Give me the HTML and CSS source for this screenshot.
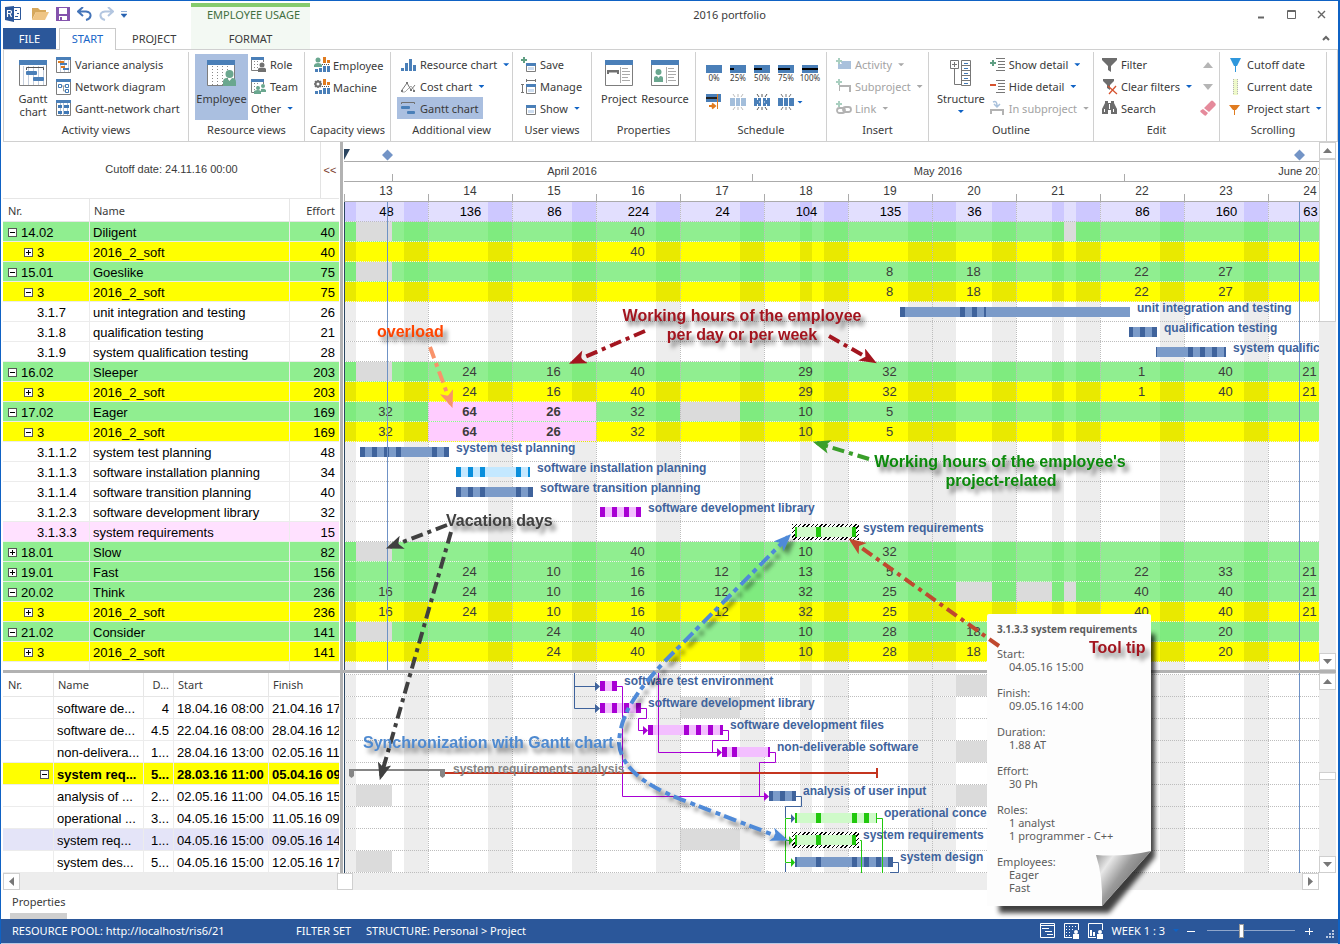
FILE: index.html
```html
<!DOCTYPE html>
<html lang="en">
<head>
<meta charset="utf-8">
<title>2016 portfolio</title>
<link rel="stylesheet" href="styles.css">
</head>
<body>
<svg class="sprite" aria-hidden="true">
  <symbol id="i-gantt-lg" viewBox="0 0 28 26"><path d="M.5 4V25.500H27.500V4" fill="#fff" stroke="#7d7d7d"/><path d="M4.500 6V25M9.500 6V25M14.500 6V25M19.500 6V25M24.500 6V25" stroke="#c3cddc"/><path d="M0 0H28V5H0z" fill="#4a7fb8"/><path d="M7.500 10V7.500H24.500V10" fill="none" stroke="#555"/><rect x="7" y="11" width="11" height="4" rx="1" fill="#4a7fb8"/><rect x="14" y="17" width="11" height="4" rx="1" fill="#4a7fb8"/></symbol>
  <symbol id="i-employee-lg" viewBox="0 0 30 26"><path d="M.5 4V25.500H27.500V4" fill="#fff" stroke="#7d7d7d"/><path d="M5.500 6V25M10.500 6V25M15.500 6V25M20.500 6V25" stroke="#8a8a8a" stroke-dasharray="1 2"/><path d="M0 0H28V5H0z" fill="#4a7fb8"/><circle cx="22.500" cy="14" r="4" fill="#6aa78f"/><path d="M16 26v-4q0-4 4-4l2.500 3 2.500-3q4 0 4 4v4z" fill="#6aa78f"/></symbol>
  <symbol id="i-project-lg" viewBox="0 0 28 26"><path d="M.5 4V25.500H27.500V4" fill="#fff" stroke="#7d7d7d"/><path d="M0 0H28V5H0z" fill="#4a7fb8"/><path d="M2 10H14V14H12V12.500H4V14H2z" fill="#707070"/><path d="M15.500 7V23" stroke="#aaa"/><path d="M17 8.500H23M17 11.500H25M17 14.500H25M17 17.500H23M17 20.500H25" stroke="#aaa"/></symbol>
  <symbol id="i-resource-lg" viewBox="0 0 28 26"><path d="M.5 4V25.500H27.500V4" fill="#fff" stroke="#7d7d7d"/><path d="M0 0H28V5H0z" fill="#4a7fb8"/><circle cx="7.500" cy="12" r="3" fill="#6aa78f"/><path d="M3 22v-4q0-2 3-2l1.500 2 1.500-2q3 0 3 2v4z" fill="#6aa78f"/><path d="M15.500 7V23" stroke="#aaa"/><path d="M17 8.500H23M17 11.500H25M17 14.500H25M17 17.500H23M17 20.500H25" stroke="#aaa"/></symbol>
  <symbol id="i-structure-lg" viewBox="0 0 22 26"><g fill="none" stroke="#777"><path d="M.5.5H8.500V8.500H.5zM4.500 9V24.500H11M11.500.5H20.500V25.500H11.500zM11.500 5.500H20.500M11.500 10.500H20.500M11.500 15.500H20.500M11.500 20.500H20.500M2 4.500H7M4.500 2V7"/></g><path d="M14 3.500H18M14 8.500H18M14 13.500H18M14 18.500H18M14 23.500H18" stroke="#3f78b5"/></symbol>
  <symbol id="i-variance" viewBox="0 0 16 16"><path d="M.5 2V15.500H14.500V2" fill="#fff" stroke="#7d7d7d"/><path d="M4.500 3V15M8.500 3V15M12.500 3V15" stroke="#c3cddc"/><path d="M0 0H15V3H0z" fill="#4a7fb8"/><path d="M2 4H8V6H2zM5 9H9V11H5z" fill="#e07b1f"/><path d="M4 6H11V8H4zM7 11H13V13H7z" fill="#4a7fb8"/></symbol>
  <symbol id="i-network" viewBox="0 0 16 16"><path d="M.5 2V15.500H14.500V2" fill="#fff" stroke="#7d7d7d"/><path d="M0 0H15V3H0z" fill="#4a7fb8"/><path d="M2.500 5.500H5.500V8.500H2.500zM9.500 5.500H12.500V8.500H9.500zM9.500 10.500H12.500V13.500H9.500z" fill="none" stroke="#3f78b5"/><path d="M6 7H9M7.500 7V12H9" stroke="#999" fill="none"/></symbol>
  <symbol id="i-ganttnet" viewBox="0 0 16 16"><path d="M.5 2V15.500H14.500V2" fill="#fff" stroke="#7d7d7d"/><path d="M4.500 3V15M7.500 3V15M11.500 3V15" stroke="#b5c3d6"/><path d="M0 0H15V3H0z" fill="#4a7fb8"/><path d="M2 5H6V8H2zM8 5H13V8H8zM2 11H6V14H2zM8 11H13V14H8z" fill="#3f78b5"/></symbol>
  <symbol id="i-role" viewBox="0 0 16 16"><path d="M.5 2V13.500H8M12.500 2V5" fill="none" stroke="#7d7d7d"/><path d="M3.500 4V13M6.500 4V13" stroke="#888" stroke-dasharray="1 2"/><path d="M0 0H13V3H0z" fill="#4a7fb8"/><circle cx="11" cy="8" r="2.500" fill="#707070"/><path d="M7 15v-3q1-2 4-1 3-1 4 1v3z" fill="#707070"/></symbol>
  <symbol id="i-team" viewBox="0 0 16 16"><path d="M.5 2V13.500H4M12.500 2V5" fill="none" stroke="#7d7d7d"/><path d="M3.500 4V11M6.500 4V8" stroke="#888" stroke-dasharray="1 2"/><path d="M0 0H13V3H0z" fill="#4a7fb8"/><circle cx="7" cy="9" r="2" fill="#6aa78f"/><circle cx="12" cy="7" r="2" fill="#6aa78f"/><path d="M3 15v-3q4-2 7 0v3zM10 13v-3q3-1 5 1v2z" fill="#6aa78f"/></symbol>
  <symbol id="i-capemp" viewBox="0 0 16 16"><circle cx="4" cy="3" r="2.500" fill="#6aa78f"/><path d="M0 10V8q1-2 4-2t4 2v2z" fill="#6aa78f"/><path d="M9 0H12V6H9zM13 3H16V6H13z" fill="#e07b1f"/><path d="M8 7.500H16" stroke="#555" stroke-dasharray="1 1"/><path d="M9 9H12V15H9zM13 9H16V15H13zM5 11H8V15H5zM1 12H4V15H1z" fill="#4a7fb8"/></symbol>
  <symbol id="i-capmach" viewBox="0 0 16 16"><circle cx="4" cy="5" r="2.500" fill="none" stroke="#707070" stroke-width="2"/><path d="M4 1V2.500M4 7.500V9M0 5H1.500M6.500 5H8M1 2L2 3M6 7L7 8M1 8L2 7M6 3L7 2" stroke="#707070" stroke-width="1.500"/><path d="M9 0H12V6H9zM13 3H16V6H13z" fill="#e07b1f"/><path d="M8 7.500H16" stroke="#555" stroke-dasharray="1 1"/><path d="M9 9H12V15H9zM13 9H16V15H13zM5 11H8V15H5zM1 12H4V15H1z" fill="#4a7fb8"/></symbol>
  <symbol id="i-reschart" viewBox="0 0 16 16"><path d="M0 11H3V14H0zM4 6H7V14H4zM8 2H11V14H8zM12 8H15V14H12z" fill="#4a7fb8"/></symbol>
  <symbol id="i-cost" viewBox="0 0 16 16"><path d="M1 13H4L10 7L13 11" fill="none" stroke="#aaa"/><path d="M1 11L6 4L10 11L14 6" fill="none" stroke="#777"/><path d="M5 3H7V5H5zM9 10H11V12H9zM0 11H2V13H0zM12 11H14V13H12z" fill="#777"/></symbol>
  <symbol id="i-ganttch" viewBox="0 0 16 16"><path d="M.5 4V2.500H13.500V4" fill="none" stroke="#707070"/><rect x="0" y="6" width="9" height="3" rx="1" fill="#4a7fb8"/><rect x="6" y="11" width="8" height="3" rx="1" fill="#4a7fb8"/></symbol>
  <symbol id="i-save" viewBox="0 0 16 16"><path d="M2 0H4V2H6V4H4V6H2V4H0V2H2z" fill="#5f9f83"/><path d="M5.500 7V14.500H14.500V7" fill="#fff" stroke="#7d7d7d"/><path d="M5 6H15V9H5z" fill="#4a7fb8"/><path d="M7 10H13V13H7z" fill="#cdddf0"/></symbol>
  <symbol id="i-manage" viewBox="0 0 16 16"><path d="M5.500 0V3M14.500 0V3M6 1.500H14M0 5.500H3M0 13.500H3M1.500 6V13" stroke="#777"/><path d="M5.500 7V14.500H14.500V7" fill="#fff" stroke="#7d7d7d"/><path d="M5 5H15V8H5z" fill="#4a7fb8"/><path d="M7 10H13V13H7z" fill="#cdddf0"/></symbol>
  <symbol id="i-show" viewBox="0 0 16 16"><path d="M5.500 7V14.500H14.500V7" fill="#fff" stroke="#7d7d7d"/><path d="M5 5H15V8H5z" fill="#4a7fb8"/><path d="M7 10H13V13H7z" fill="#cdddf0"/></symbol>
  <symbol id="i-tomark" viewBox="0 0 16 16"><path d="M0 0H15V8H0z" fill="#4a7fb8"/><path d="M0 3H11V5H0z" fill="#222"/><path d="M11.500 0V15" stroke="#e07b1f"/><path d="M3 12H8M6 9.500L9 12L6 14.500" stroke="#e07b1f" stroke-width="2" fill="none"/></symbol>
  <symbol id="i-split" viewBox="0 0 16 16"><path d="M0 4H5V12H0zM6 4H10V12H6zM11 4H16V12H11z" fill="#4a7fb8"/><path d="M3 0L5 3M8 0V3M13 0L11 3M3 16L5 13M8 16V13M13 16L11 13" stroke="#777"/></symbol>
  <symbol id="i-merge" viewBox="0 0 16 16"><path d="M0 4H7V12H0zM9 4H16V12H9z" fill="#4a7fb8"/><path d="M3.500 4V6M3.500 10V12M12.500 4V6M12.500 10V12M5 8H6M10 8H11" stroke="#fff"/><path d="M3 0L5 3M8 0V3M13 0L11 3M3 16L5 13M8 16V13M13 16L11 13" stroke="#555"/></symbol>
  <symbol id="i-activity" viewBox="0 0 16 16"><path d="M4 4H15V12H2V7H6z" fill="#a9c1dc"/><path d="M2 1H4V3H6V5H4V7H2V5H0V3H2z" fill="#a9cfc0"/></symbol>
  <symbol id="i-subproj" viewBox="0 0 16 16"><path d="M3 6H15V13H13V8H4V12H3z" fill="#b3b3b3"/><path d="M2 0H4V2H6V4H4V6H2V4H0V2H2z" fill="#a9cfc0"/></symbol>
  <symbol id="i-link" viewBox="0 0 16 16"><g fill="none" stroke="#b3b3b3" stroke-width="1.800"><rect x="1" y="8" width="8" height="5" rx="2.500"/><rect x="7" y="7" width="8" height="5" rx="2.500"/></g><path d="M2 1H4V3H6V5H4V7H2V5H0V3H2z" fill="#a9cfc0"/></symbol>
  <symbol id="i-showdet" viewBox="0 0 16 16"><path d="M2 3H4V5H6V7H4V9H2V7H0V5H2z" fill="#5f9f83"/><path d="M6 1.500H15M8 4.500H15M8 7.500H15M8 10.500H15M6 13.500H15" stroke="#777"/></symbol>
  <symbol id="i-hidedet" viewBox="0 0 16 16"><path d="M0 5H6V7H0z" fill="#d6532f"/><path d="M6 1.500H15M8 4.500H15M8 7.500H15M8 10.500H15M6 13.500H15" stroke="#777"/></symbol>
  <symbol id="i-insub" viewBox="0 0 16 16"><path d="M0 9H14V15H12V11H2V14H0z" fill="#b3b3b3"/><path d="M3 2Q7 0 7 6M4 4L7 7L10 4" fill="none" stroke="#a9c1dc" stroke-width="1.500"/></symbol>
  <symbol id="i-filter" viewBox="0 0 16 16"><path d="M0 1H15V3L9 9V15L6 13V9L0 3z" fill="#6d6d6d"/></symbol>
  <symbol id="i-clear" viewBox="0 0 16 16"><path d="M1 0H12V2L8 6V11L5 9V6L1 2z" fill="#6d6d6d"/><path d="M6 7L15 15M14 7L7 15" stroke="#d6532f" stroke-width="1.300"/></symbol>
  <symbol id="i-search" viewBox="0 0 16 16"><path d="M3 1H6V3H9V1H12V3L15 9V14H9V10H6V14H0V9L3 3z" fill="#6d6d6d"/><path d="M2.500 9V12M11.500 9V12M7.500 4V9" stroke="#fff"/></symbol>
  <symbol id="i-eraser" viewBox="0 0 16 16"><path d="M4 8L11 1Q12 0 13 1L15.500 3.500Q16 4.500 15.500 5.500L9 12zM3 9L8 13L6 15.500Q5 16 4 15L.5 12Q0 11 .5 10.500z" fill="#e58a9b"/></symbol>
  <symbol id="i-cutoff" viewBox="0 0 16 16"><path d="M2 1H13L9 9H6z" fill="#2f97dc"/><path d="M7.500 8V15" stroke="#2f97dc"/></symbol>
  <symbol id="i-current" viewBox="0 0 16 16"><path d="M5 0H10V16H5z" fill="#eef9c9"/><path d="M5.500 0V16M9.500 0V16" stroke="#b5b5b5" stroke-dasharray="1 1"/></symbol>
  <symbol id="i-pstart" viewBox="0 0 16 16"><path d="M1 5H12L8 10H5z" fill="#e07b1f"/><path d="M6.500 9V15" stroke="#e07b1f"/></symbol>
</svg>

<div class="window">
  <header class="head">
    <div class="head-left">
      <div class="quick">
        <button type="button" aria-label="Application menu"><svg width="16" height="16" viewBox="0 0 16 16"><path d="M0 1L9 0V16L0 14z" fill="#2b579a"/><path d="M9 1.500H15.500V13.500H9" fill="#fff" stroke="#2b579a"/><path d="M10 4.500H12M12 7.500H14M10 10.500H13" stroke="#2b579a"/><path d="M2.500 11V4.500H5Q6.500 4.500 6.500 6T5 7.500H3M5 8L6.500 11" fill="none" stroke="#fff" stroke-width="1.200"/></svg></button>
        <button type="button" class="gap" aria-label="Open"><svg width="17" height="14" viewBox="0 0 17 14"><path d="M0 13V1H6L8 3H14V5H4z" fill="#d6a85c"/><path d="M4 5H17L13 13H0z" fill="#efc585"/></svg></button>
        <button type="button" aria-label="Save"><svg width="14" height="14" viewBox="0 0 14 14"><path d="M0 0H14V14H0z" fill="#8453ad"/><path d="M3 1H11V7H3zM3 9H11V13H3z" fill="#fff"/><path d="M4 10H6V13H4z" fill="#8453ad"/></svg></button>
        <button type="button" aria-label="Undo"><svg width="15" height="14" viewBox="0 0 15 14"><path d="M6 0L1 4.500L6 9M2 4.500H9Q14 5 13.500 9Q13 12 9 13" fill="none" stroke="#4474b8" stroke-width="2"/></svg></button>
        <button type="button" aria-label="Redo"><svg width="15" height="14" viewBox="0 0 15 14"><path d="M9 0L14 4.500L9 9M13 4.500H6Q1 5 1.500 9Q2 12 6 13" fill="none" stroke="#b3c6e0" stroke-width="2"/></svg></button>
        <button type="button" aria-label="Customize toolbar"><svg width="6" height="7" viewBox="0 0 6 7"><path d="M0 .5H6M0 3H6L3 6.500z" stroke="#2560b0" stroke-width=".5" fill="#2560b0"/></svg></button>
      </div>
      <nav class="tabs">
        <button type="button" class="tab file">FILE</button>
        <button type="button" class="tab active">START</button>
        <button type="button" class="tab">PROJECT</button>
      </nav>
    </div>
    <div class="context"><span>EMPLOYEE USAGE</span><button type="button">FORMAT</button></div>
    <h1 class="title">2016 portfolio</h1>
    <div class="controls">
      <div>
        <button type="button" aria-label="Minimize"><svg width="9" height="9"><path d="M1 7.500H7" stroke="#666" stroke-width="2"/></svg></button>
        <button type="button" aria-label="Maximize"><svg width="9" height="9"><path d="M.5.5H8.500V8.500H.5zM0 1.500H9" fill="none" stroke="#666"/></svg></button>
        <button type="button" aria-label="Close"><svg width="9" height="9"><path d="M1 1L8 8M8 1L1 8" stroke="#666" stroke-width="1.400"/></svg></button>
      </div>
      <button type="button" aria-label="Collapse ribbon"><svg width="8" height="6"><path d="M1 5L4 2L7 5" fill="none" stroke="#666" stroke-width="2"/></svg></button>
    </div>
  </header>

  <section class="ribbon">
    <div class="group g-activity">
      <div class="tools">
        <button type="button" class="big w42"><svg width="28" height="26"><use href="#i-gantt-lg"/></svg><span>Gantt<br>chart</span></button>
        <div class="col">
          <button type="button" class="tool"><svg width="16" height="16"><use href="#i-variance"/></svg>Variance analysis</button>
          <button type="button" class="tool"><svg width="16" height="16"><use href="#i-network"/></svg>Network diagram</button>
          <button type="button" class="tool"><svg width="16" height="16"><use href="#i-ganttnet"/></svg>Gantt-network chart</button>
        </div>
      </div><h2>Activity views</h2>
    </div>
    <div class="group g-resource">
      <div class="tools">
        <button type="button" class="big w53 on"><svg width="30" height="26"><use href="#i-employee-lg"/></svg><span>Employee</span></button>
        <div class="col">
          <button type="button" class="tool"><svg width="16" height="16"><use href="#i-role"/></svg>Role</button>
          <button type="button" class="tool"><svg width="16" height="16"><use href="#i-team"/></svg>Team</button>
          <button type="button" class="tool">Other<i class="drop far"></i></button>
        </div>
      </div><h2>Resource views</h2>
    </div>
    <div class="group g-capacity">
      <div class="tools"><div class="col">
        <button type="button" class="tool"><svg width="16" height="16"><use href="#i-capemp"/></svg>Employee</button>
        <button type="button" class="tool"><svg width="16" height="16"><use href="#i-capmach"/></svg>Machine</button>
      </div></div><h2>Capacity views</h2>
    </div>
    <div class="group g-extra">
      <div class="tools"><div class="col">
        <button type="button" class="tool"><svg width="16" height="16"><use href="#i-reschart"/></svg>Resource chart<i class="drop"></i></button>
        <button type="button" class="tool"><svg width="16" height="16"><use href="#i-cost"/></svg>Cost chart<i class="drop"></i></button>
        <button type="button" class="tool on"><svg width="16" height="16"><use href="#i-ganttch"/></svg>Gantt chart</button>
      </div></div><h2>Additional view</h2>
    </div>
    <div class="group">
      <div class="tools"><div class="col">
        <button type="button" class="tool"><svg width="16" height="16"><use href="#i-save"/></svg>Save</button>
        <button type="button" class="tool"><svg width="16" height="16"><use href="#i-manage"/></svg>Manage</button>
        <button type="button" class="tool"><svg width="16" height="16"><use href="#i-show"/></svg>Show<i class="drop"></i></button>
      </div></div><h2>User views</h2>
    </div>
    <div class="group">
      <div class="tools">
        <button type="button" class="big w46"><svg width="28" height="26"><use href="#i-project-lg"/></svg><span>Project</span></button>
        <button type="button" class="big w46"><svg width="28" height="26"><use href="#i-resource-lg"/></svg><span>Resource</span></button>
      </div><h2>Properties</h2>
    </div>
    <div class="group">
      <div class="tools percents">
        <button type="button" class="pct"><svg width="16" height="8"><path d="M0 0H16V8H0z" fill="#4a7fb8"/></svg>0%</button>
        <button type="button" class="pct"><svg width="16" height="8"><path d="M0 0H16V8H0z" fill="#4a7fb8"/><path d="M0 3H4V5H0z"/></svg>25%</button>
        <button type="button" class="pct"><svg width="16" height="8"><path d="M0 0H16V8H0z" fill="#4a7fb8"/><path d="M0 3H8V5H0z"/></svg>50%</button>
        <button type="button" class="pct"><svg width="16" height="8"><path d="M0 0H16V8H0z" fill="#4a7fb8"/><path d="M0 3H12V5H0z"/></svg>75%</button>
        <button type="button" class="pct"><svg width="16" height="8"><path d="M0 0H16V8H0z" fill="#4a7fb8"/><path d="M0 3H16V5H0z"/></svg>100%</button>
        <button type="button" aria-label="Move to date"><svg width="16" height="16"><use href="#i-tomark"/></svg></button>
        <button type="button" class="faded" aria-label="Split"><svg width="16" height="16"><use href="#i-split"/></svg></button>
        <button type="button" aria-label="Split all"><svg width="16" height="16"><use href="#i-merge"/></svg></button>
        <button type="button" class="with-drop" aria-label="Join"><svg width="16" height="16"><use href="#i-split"/></svg><i class="drop"></i></button>
      </div><h2>Schedule</h2>
    </div>
    <div class="group g-insert">
      <div class="tools"><div class="col">
        <button type="button" class="tool" disabled><svg width="16" height="16"><use href="#i-activity"/></svg>Activity<i class="drop"></i></button>
        <button type="button" class="tool" disabled><svg width="16" height="16"><use href="#i-subproj"/></svg>Subproject<i class="drop"></i></button>
        <button type="button" class="tool" disabled><svg width="16" height="16"><use href="#i-link"/></svg>Link<i class="drop"></i></button>
      </div></div><h2>Insert</h2>
    </div>
    <div class="group g-outline">
      <div class="tools">
        <button type="button" class="big w50"><svg width="22" height="26"><use href="#i-structure-lg"/></svg><span>Structure</span><i class="drop"></i></button>
        <div class="col">
          <button type="button" class="tool"><svg width="16" height="16"><use href="#i-showdet"/></svg>Show detail<i class="drop"></i></button>
          <button type="button" class="tool"><svg width="16" height="16"><use href="#i-hidedet"/></svg>Hide detail<i class="drop"></i></button>
          <button type="button" class="tool" disabled><svg width="16" height="16"><use href="#i-insub"/></svg>In subproject<i class="drop"></i></button>
        </div>
      </div><h2>Outline</h2>
    </div>
    <div class="group g-edit">
      <div class="tools spread">
        <div class="col">
          <button type="button" class="tool"><svg width="16" height="16"><use href="#i-filter"/></svg>Filter</button>
          <button type="button" class="tool"><svg width="16" height="16"><use href="#i-clear"/></svg>Clear filters<i class="drop"></i></button>
          <button type="button" class="tool"><svg width="16" height="16"><use href="#i-search"/></svg>Search</button>
        </div>
        <div class="col">
          <button type="button" class="tool" aria-label="Previous"><svg width="16" height="16"><path d="M3 11H13L8 5z" fill="#b5b5b5"/></svg></button>
          <button type="button" class="tool" aria-label="Next"><svg width="16" height="16"><path d="M3 5H13L8 11z" fill="#b5b5b5"/></svg></button>
          <button type="button" class="tool" aria-label="Erase"><svg width="16" height="16"><use href="#i-eraser"/></svg></button>
        </div>
      </div><h2>Edit</h2>
    </div>
    <div class="group">
      <div class="tools"><div class="col">
        <button type="button" class="tool"><svg width="16" height="16"><use href="#i-cutoff"/></svg>Cutoff date</button>
        <button type="button" class="tool"><svg width="16" height="16"><use href="#i-current"/></svg>Current date</button>
        <button type="button" class="tool"><svg width="16" height="16"><use href="#i-pstart"/></svg>Project start<i class="drop"></i></button>
      </div></div><h2>Scrolling</h2>
    </div>
  </section>

  <main class="work">
    <section class="pane upper">
      <div class="list">
        <div class="cutoff"><span>Cutoff date: 24.11.16 00:00</span><button type="button">&lt;&lt;</button></div>
        <table class="grid staff">
          <colgroup><col class="c-nr"><col class="c-name"><col></colgroup>
          <thead><tr><th>Nr.</th><th>Name</th><th class="num">Effort</th></tr></thead>
          <tbody id="staff"></tbody>
        </table>
      </div>
      <div class="chart">
        <div class="line">
          <svg class="marks" width="970" height="19"><path d="M0 7H6L0 18z" fill="#2b4560"/><path d="M38 13L43.500 7.500L49 13L43.500 18.500zM950 13L955.500 7.500L961 13L955.500 18.500z" fill="#7394c6"/></svg>
        </div>
        <div class="line months"><span></span><span>April 2016</span><span>May 2016</span><span>June 2016</span></div>
        <div class="line weeks" id="weeks"></div>
        <div class="plot" id="usage"><i class="today start"></i><i class="today cut"></i><i class="today end"></i></div>
      </div>
      <div class="vbar"><button type="button" class="sb" aria-label="Scroll up"><svg width="9" height="5"><path d="M0 5H9L4.500 0z" fill="#777"/></svg></button><div class="track"><i class="thumb tall"></i></div><button type="button" class="sb" aria-label="Scroll down"><svg width="9" height="5"><path d="M0 0H9L4.500 5z" fill="#777"/></svg></button></div>
    </section>
    <div class="hsplit"></div>
    <section class="pane lower">
      <div class="list">
        <table class="grid tasks">
          <colgroup><col class="c-no"><col class="c-task"><col class="c-dur"><col class="c-start"><col></colgroup>
          <thead><tr><th>Nr.</th><th>Name</th><th class="num">D...</th><th>Start</th><th>Finish</th></tr></thead>
          <tbody id="tasks"></tbody>
        </table>
      </div>
      <div class="chart">
        <div class="plot" id="gantt"><i class="today start"></i><i class="today end"></i><div class="edge"></div></div>
        <svg class="links" width="600" height="200" fill="none">
          <g stroke="#3f639c"><path d="M230.500 0V35.500H252M230.500 13.500H252"/><path d="M452 123.500H457.500V133.500H441.500V145M441.500 190V199M549 189.500H554.500V199.500H546"/></g>
          <g stroke="#a800d4"><path d="M273 13.500H278.500V123.500H421"/><path d="M297 35.500H302.500V45.500H294.500V57.500H300"/><path d="M314.500 0V79.500H373M379 57.500H384.500V67.500H368.500V79"/><path d="M426 79.500H431.500V89.500H415.500V123"/></g>
          <g stroke="#22c80e"><path d="M441.500 145.500V189.500H447M441.500 145.500H447M441.500 167.500H447M533 145.500H538.500V200M516 167.500H517.500V200"/></g>
          <path d="M251 9L256 13.500L251 18zM251 31L256 35.500L251 40zM447 141L451 145.500L447 150z" fill="#3f639c"/>
          <path d="M299 53L304 57.500L299 62zM373 75L378 79.500L373 84zM420 119L425 123.500L420 128z" fill="#a800d4"/>
          <path d="M447 185L451 189.500L447 194zM445 163L449 167.500L445 172z" fill="#22c80e"/>
          <path d="M5 96H101V103L98.500 105L96 103V98H10V103L7.500 105L5 103z" fill="#858585"/>
          <path d="M101 100H533M533 95V105" stroke="#c4351f" stroke-width="2"/>
        </svg>
      </div>
      <div class="vbar"><button type="button" class="sb" aria-label="Scroll up"><svg width="9" height="5"><path d="M0 5H9L4.500 0z" fill="#777"/></svg></button><div class="track mid"><i class="thumb short"></i></div><button type="button" class="sb" aria-label="Scroll down"><svg width="9" height="5"><path d="M0 0H9L4.500 5z" fill="#777"/></svg></button></div>
    </section>
    <div class="hbar"><button type="button" class="sb" aria-label="Scroll left"><svg width="5" height="9"><path d="M5 0V9L0 4.500z" fill="#777"/></svg></button><div class="track"><i class="thumb wide"></i></div><button type="button" class="sb" aria-label="Scroll right"><svg width="5" height="9"><path d="M0 0V9L5 4.500z" fill="#777"/></svg></button></div>
  </main>

  <div class="dock"><button type="button">Properties</button></div>

  <aside class="tip">
    <svg class="tip-page" width="190" height="310" viewBox="0 0 190 310">
      <defs>
        <linearGradient id="curl" x1="0" y1="0" x2="1" y2=".7"><stop offset="0" stop-color="#8f8f8f"/><stop offset=".25" stop-color="#e8e8e8"/><stop offset=".5" stop-color="#9b9b9b"/><stop offset=".75" stop-color="#777"/></linearGradient>
        <filter id="soft" x="-10%" y="-10%" width="130%" height="120%"><feGaussianBlur stdDeviation="2.500"/></filter>
      </defs>
      <path d="M12 20H168V243L122 299H12z" fill="#000" opacity=".75" filter="url(#soft)"/>
      <path d="M0 2Q0 0 2 0H162Q164 0 164 2V237L115 292H0z" fill="#fdfdfd"/>
      <path d="M109 241Q137 243 164 237L115 292Q116 262 109 241z" fill="url(#curl)"/>
    </svg>
    <div class="tip-text">
      <strong>3.1.3.3 system requirements</strong>
      <dl>
        <dt>Start:</dt><dd>04.05.16 15:00</dd>
        <dt>Finish:</dt><dd>09.05.16 14:00</dd>
        <dt>Duration:</dt><dd>1.88 AT</dd>
        <dt>Effort:</dt><dd>30 Ph</dd>
        <dt>Roles:</dt><dd>1 analyst</dd><dd>1 programmer - C++</dd>
        <dt>Employees:</dt><dd>Eager</dd><dd>Fast</dd>
      </dl>
    </div>
  </aside>

  <svg class="notes" width="1340" height="944" viewBox="0 0 1340 944">
    <defs>
      <marker id="tip-shape" viewBox="0 0 20 16" refX="15" refY="8" markerWidth="18" markerHeight="14" orient="auto-start-reverse" markerUnits="userSpaceOnUse"><path d="M0 0L20 8L0 16L5 8z" fill="context-stroke"/></marker>
    </defs>
    <g class="strokes">
      <path d="M430 347L451 404" stroke="#f9936b"/>
      <path d="M645 331L573 362" stroke="#a3151f"/>
      <path d="M829 336L873 361" stroke="#a3151f"/>
      <path d="M869 459L817 443" stroke="#3a9f2a"/>
      <path d="M447 525L390 547" stroke="#404040"/>
      <path d="M451 532L381 776" stroke="#404040"/>
      <path d="M999 646L852 541" stroke="#c0492f"/>
      <path class="sync" d="M788 537L665 661C640 688 620 712 619 743C621 770 650 787 680 799L740 822L784 839" stroke="#4f8ad8"/>
    </g>
    <g class="captions">
      <text x="377" y="337" fill="#ff4500">overload</text>
      <text x="742" y="321" fill="#a3151f" text-anchor="middle">Working hours of the employee</text>
      <text x="742" y="340" fill="#a3151f" text-anchor="middle">per day or per week</text>
      <text x="1000" y="467" fill="#0b8a0b" text-anchor="middle">Working hours of the employee's</text>
      <text x="1001" y="486" fill="#0b8a0b" text-anchor="middle">project-related</text>
      <text x="446" y="526" fill="#404040">Vacation days</text>
      <text x="363" y="748" fill="#4f8ad0">Synchronization with Gantt chart</text>
      <text x="1089" y="653" fill="#a3151f">Tool tip</text>
    </g>
  </svg>

  <footer class="status">
    <span class="pool">RESOURCE POOL: http://localhost/ris6/21</span><span class="fset">FILTER SET</span><span>STRUCTURE: Personal &gt; Project</span>
    <div class="zoom">
      <button type="button" aria-label="Gantt view"><svg width="16" height="16" fill="none" stroke="#fff"><path d="M.5.5H14.500V14.500H.5zM1 2.500H14M2 5.500H9M5 8.500H12M7 11.500H13"/></svg></button>
      <button type="button" aria-label="Usage view"><svg width="16" height="16"><path d="M.5 15V.5H14.500V7M.5 14.500H8" fill="none" stroke="#fff"/><path d="M2 3.500H13M2 6.500H10M2 9.500H8M2 12.500H8" stroke="#fff" stroke-dasharray="1 2"/><circle cx="12" cy="9" r="2" fill="#fff"/><path d="M9 11H15V16H9z" fill="#fff"/></svg></button>
      <button type="button" aria-label="Chart view"><svg width="16" height="16"><path d="M.5 15V.5H14.500V7M.5 14.500H8" fill="none" stroke="#fff"/><path d="M2 7H4V13H2zM5 9H7V13H5z" fill="#fff"/><circle cx="12" cy="9" r="2" fill="#fff"/><path d="M9 11H15V16H9z" fill="#fff"/></svg></button>
      <span>WEEK 1 : 3</span><i class="drop"></i>
      <button type="button" aria-label="Zoom out"><svg width="8" height="8"><path d="M0 4.500H8" stroke="#fff"/></svg></button>
      <input type="range" min="0" max="100" value="38" aria-label="Zoom">
      <button type="button" aria-label="Zoom in"><svg width="8" height="8"><path d="M0 4.500H8M4.500 1V8" stroke="#fff"/></svg></button>
      <svg class="grip" width="9" height="9"><path d="M7 0H9V2H7zM4 3H6V5H4zM7 3H9V5H7zM1 6H3V8H1zM4 6H6V8H4zM7 6H9V8H7z" fill="#b9c8e0"/></svg>
    </div>
  </footer>
</div>
<script src="script.js"></script>
</body>
</html>
```

FILE: styles.css
```css
* { box-sizing: border-box; }
body { margin: 0; font-family: "Noto Sans", "Open Sans", sans-serif; font-size: 11px; color: #3a3a3a; background: #fff; }
button { border: 0; padding: 0; margin: 0; background: none; font: inherit; color: inherit; }
svg { display: block; flex: none; }
h1, h2, dl, dd { margin: 0; font-size: 11px; font-weight: 400; }
.sprite { position: absolute; width: 0; height: 0; }

.window { position: relative; display: flex; flex-direction: column; height: 100vh; overflow: hidden; border: solid #0f62c4; border-width: 1px 2px 0 1px; }

.head { display: grid; grid-template-columns: 190px 119px 1fr 189px; height: 48px; flex: none; }
.head-left { display: flex; flex-direction: column; justify-content: space-between; }
.quick { display: flex; align-items: center; gap: 7px; height: 26px; padding-left: 4px; }
.quick .gap { margin-left: 4px; }
.tabs { display: flex; gap: 3px; padding-left: 2px; }
.tab { height: 21px; padding: 0 13px; }
.tab.file { width: 53px; background: #2b579a; color: #fff; }
.tab.active { height: 22px; margin-bottom: -1px; width: 57px; padding: 0 0 2px; border: 1px solid #c9c9c9; border-bottom: 0; background: #fff; color: #1a66c8; z-index: 1; }
.context { display: flex; flex-direction: column; align-items: center; margin-top: 2px; border-top: 4px solid #85cb6d; background: #f3f9f3; color: #3f6f3f; }
.context span { height: 21px; line-height: 16px; padding-left: 6px; }
.context button { line-height: 21px; color: #3a3a3a; }
.title { line-height: 28px; text-align: center; }
.controls { display: flex; flex-direction: column; align-items: flex-end; gap: 16px; padding: 9px 8px 0 0; }
.controls div { display: flex; gap: 21px; flex: none; padding-right: 4px; }

.ribbon { display: grid; grid-template-columns: 185px 116px 86px 122px 79px 104px 131px 102px 165px 126px 107px; flex: none; height: 93px; margin: 0 0 0 2px; border: 1px solid #d0d0d0; }
.group { display: flex; flex-direction: column; margin: 2px 0 4px; border-right: 1px solid #d0d0d0; }
.group h2 { text-align: center; line-height: 22px; }
.tools { display: flex; height: 67px; padding: 2px 0 0 4px; }
.g-activity .tools { padding-left: 8px; }
.g-activity .tool { padding: 0 2px; }
.g-resource .tools, .g-extra .tools { padding-left: 6px; }
.g-capacity .tools, .g-insert .tools { padding-left: 5px; }
.g-outline .tools { padding-left: 7px; }
.g-edit .tools { padding-right: 3px; }
.col { display: flex; flex-direction: column; align-items: flex-start; }
.tool { display: flex; align-items: center; gap: 3px; height: 22px; padding: 0 4px; white-space: nowrap; }
.g-resource .tool { padding: 0 3px; }
.tool:disabled { color: #a3a3a3; }
.on { background: #aabfe0; }
.big { display: flex; flex-direction: column; align-items: center; height: 66px; padding-top: 6px; line-height: 13px; }
.big span { margin-top: 6px; }
.big .drop { margin: 5px 0 0; }
.w42 { width: 42px; }
.w46 { width: 46px; }
.w50 { width: 50px; }
.w53 { width: 53px; }
.drop { flex: none; width: 6px; height: 3px; margin-left: 3px; background: #0f62c4; clip-path: polygon(0 0, 100% 0, 50% 100%); }
.tool:disabled .drop { background: #a8a8a8; }
.percents { display: grid; grid-template-columns: repeat(5, 24px); grid-template-rows: 32px 24px; align-items: center; justify-items: center; padding: 6px 0 0 6px; }
.pct { display: flex; flex-direction: column; align-items: center; font-size: 8px; line-height: 10px; }
.with-drop { display: flex; align-items: center; margin-right: -9px; }
.faded { opacity: .5; }
.spread { justify-content: space-between; }

.work { display: flex; flex-direction: column; flex: 1; min-height: 0; margin: 0 2px; }
.pane { display: flex; min-height: 0; }
.upper { flex: 1; }
.lower { flex: none; }
.list { flex: none; width: 340px; overflow: hidden; border-right: 3px solid #b2b2b2; padding-right: 1px; }
.hsplit { flex: none; height: 3px; background: #b2b2b2; }
.chart { position: relative; flex: 1; min-width: 0; overflow: hidden; padding-left: 1px; font-family: "Liberation Sans", Arial, sans-serif; }

.cutoff { display: flex; height: 56px; line-height: 55px; text-align: center; font-family: "Liberation Sans", Arial, sans-serif; }
.cutoff span { flex: 1; padding-left: 20px; }
.cutoff button { width: 19px; border-left: 1px solid #e3e3e3; color: #7a3b2c; }
.grid { width: 100%; table-layout: fixed; border-collapse: separate; border-spacing: 0; font: 13px "Liberation Sans", Arial, sans-serif; color: #000; }
.grid th { height: 24px; padding: 0 4px; border: 1px solid #e6e6e6; border-left: 0; text-align: left; font: 11px "Noto Sans", sans-serif; color: #3a3a3a; }
.grid th:first-child { padding-left: 5px; }
.grid td { height: 20px; padding: 2px 4px 0 3px; border: solid #ececec; border-width: 0 1px 1px 0; white-space: nowrap; overflow: hidden; line-height: 17px; }
.grid td:last-child, .grid th:last-child { border-right: 0; }
.grid.tasks td { height: 22px; line-height: 19px; }
.tasks th { border-top: 0; }
.grid .num { text-align: right; }
.c-nr { width: 87px; } .c-name { width: 200px; }
.c-no { width: 51px; } .c-task { width: 90px; } .c-dur { width: 30px; } .c-start { width: 95px; }
.staff .person td { background: #90ee90; }
.staff .proj td, .tasks .sum td { background: #ff0; }
.tasks .sum { font-weight: 700; }
.staff .sel td { background: #ffe1ff; }
.tasks .sel td { background: #e4e4f8; }
.nr { display: flex; align-items: center; gap: 4px; padding-left: 2px; }
.proj .nr { padding-left: 18px; }
.task .nr { padding-left: 31px; }
.tasks .nr { justify-content: flex-end; }
.box { width: 9px; height: 9px; border: 1px solid #555; background: linear-gradient(#000, #000) center / 5px 1px no-repeat #fff; }
.box.plus { background: linear-gradient(#000, #000) center / 5px 1px no-repeat, linear-gradient(#000, #000) center / 1px 5px no-repeat, #fff; }

.line { height: 20px; border-bottom: 1px solid #ababab; display: grid; align-items: stretch; text-align: center; line-height: 19px; }
.months { grid-template-columns: 48px 360px 372px 360px; }
.weeks { grid-template-columns: repeat(12, 84px); font-size: 12px; }
.months span, .weeks span { background: linear-gradient(#ababab, #ababab) 0 100% / 1px 7px no-repeat; }
.months span:first-child { background: none; }
.plot { position: relative; }
.row {
  position: relative; display: grid; grid-template-columns: repeat(12, 84px); height: 20px; --base: #fff; --band: #ededed;
  border-bottom: 1px dotted #bdbdbd; font-size: 13px; line-height: 19px; text-align: center; color: #3c3c3c;
  background:
    linear-gradient(var(--band), var(--band)) 0 0 / 12px 100% no-repeat,
    linear-gradient(var(--band), var(--band)) 456px 0 / 12px 100% no-repeat,
    linear-gradient(var(--band), var(--band)) 588px 0 / 24px 100% no-repeat,
    linear-gradient(var(--band), var(--band)) 708px 0 / 12px 100% no-repeat,
    repeating-linear-gradient(to right, transparent 0 60px, var(--band) 60px 84px),
    var(--base);
}
.row span { position: relative; padding-right: 2px; border-left: 1px dotted #bdbdbd; }
.row.total span { padding-right: 0; }
.row span.over { background: #fcf; font-weight: 700; }
.row.total { --base: #e2dffe; --band: #cdc8ff; color: #000; }
.row.person { --base: #90ee90; --band: #7feb7f; border-bottom-color: #eee; }
.row.proj { --base: #ff0; --band: #e9e900; border-bottom-color: #eee; }
#gantt .row { height: 22px; }
.edge { height: 2px; border-bottom: 1px dotted #bdbdbd; }
.off { position: absolute; top: 0; bottom: 0; background: #dbdbdb; }
.today { position: absolute; z-index: 2; top: 0; bottom: 0; left: 0; width: 1px; background: #6f92c6; }
.today.start { background: #2b4560; }
.today.cut { left: 43px; }
.today.end { left: 955px; }
.bar { position: absolute; top: 5px; height: 10px; background: #7b9bc9; --dark: #3f639c; }
#gantt .bar { top: 6px; }
.bar i { position: absolute; top: 0; bottom: 0; background: var(--dark); }
.bar.cyan { background: #c4e8ff; --dark: #0a8fdc; }
.bar.violet { background: #f3bfff; --dark: #a800d4; }
.bar.green { background: #cffac9; --dark: #22c80e; }
.hatch { position: absolute; top: 2px; height: 16px; background: repeating-linear-gradient(135deg, #000 0 1px, #fff 1px 3px); }
#gantt .hatch { top: 3px; }
.label { position: absolute; top: 0; line-height: 13px; font-size: 12px; font-weight: 700; color: #3f639c; white-space: nowrap; z-index: 1; }
.label.gray { color: #858585; }
.links { position: absolute; left: 1px; top: 0; }

.vbar, .hbar { flex: none; display: flex; background: #ededed; }
.vbar { flex-direction: column; width: 17px; }
.hbar { height: 17px; margin-right: 17px; }
.sb { flex: none; width: 17px; height: 17px; border: 1px solid #cfcfcf; background: #fff; display: flex; align-items: center; justify-content: center; }
.track { flex: 1; display: flex; min-width: 0; }
.track.mid { align-items: center; }
.thumb { border: 1px solid #cfcfcf; background: #fff; }
.thumb.tall { width: 17px; height: 33%; }
.thumb.short { width: 17px; height: 8px; margin-top: 5px; }
.thumb.wide { width: 16px; margin-left: 317px; }

.dock { flex: none; height: 29px; padding-left: 9px; }
.dock button { height: 29px; padding: 0 2px; border-bottom: 6px solid #cfcfcf; line-height: 23px; }

.tip { position: absolute; z-index: 3; left: 986px; top: 613px; color: #5c5c5c; line-height: 13px; }
.tip-text { position: relative; padding: 9px 10px; }
.tip-text strong { display: block; font-weight: 700; font-size: 10px; white-space: nowrap; }
.tip dt { margin-top: 13px; }
.tip dt:first-child { margin-top: 11px; }
.tip dd { padding-left: 12px; }
.tip-page { position: absolute; left: 0; top: 0; }

.notes { position: absolute; left: -1px; top: -1px; pointer-events: none; z-index: 4; }
.strokes path { fill: none; stroke-width: 4; stroke-dasharray: 12 5 4 5; marker-end: url(#tip-shape); }
.strokes .sync { marker-start: url(#tip-shape); stroke-dasharray: 13 5 5 4; filter: drop-shadow(4px 5px 2px rgba(0, 0, 0, .45)); }
.captions { font: 700 16px "Liberation Sans", Arial, sans-serif; filter: drop-shadow(4px 5px 2px rgba(0, 0, 0, .5)); }

.status { flex: none; display: flex; align-items: center; height: 25px; margin: 0 -2px 0 -1px; padding: 0 6px 1px 12px; background: #2b579a; border-bottom: 1px solid #b8c9e4; color: #fff; white-space: nowrap; }
.pool { width: 284px; }
.fset { width: 70px; }
.zoom { display: flex; align-items: center; gap: 8px; margin-left: auto; }
.zoom .drop { margin: 0; }
.zoom input { appearance: none; width: 88px; height: 14px; margin: 0 2px 0 4px; background: linear-gradient(#8fa6cb, #8fa6cb) center / 100% 1px no-repeat; }
.zoom input::-webkit-slider-thumb { appearance: none; width: 5px; height: 14px; background: #fff; border: 1px solid #999; }
.zoom .grip { margin-left: 4px; align-self: flex-end; }
```

FILE: script.js
```js
const GREY_START = [12, 36];

/* kind, number, name, effort, weekly hours, options */
const staff = [
  ['person', '14.02', 'Diligent', 40, { 16: 40 }, { box: '-', off: [GREY_START, [720, 12]] }],
  ['proj', '3', '2016_2_soft', 40, { 16: 40 }, { box: '+' }],
  ['person', '15.01', 'Goeslike', 75, { 19: 8, 20: 18, 22: 22, 23: 27 }, { box: '-', off: [GREY_START] }],
  ['proj', '3', '2016_2_soft', 75, { 19: 8, 20: 18, 22: 22, 23: 27 }, { box: '-' }],
  ['task', '3.1.7', 'unit integration and testing', 26, {}, { bar: ['blue', 556, 230, [[0, 5], [60, 5], [72, 5], [84, 2]]] }],
  ['task', '3.1.8', 'qualification testing', 21, {}, { bar: ['blue', 785, 28, [[0, 4], [11, 5], [23, 5]]] }],
  ['task', '3.1.9', 'system qualification testing', 28, {}, { bar: ['blue', 812, 70, [[0, 1], [32, 5], [44, 5], [56, 5], [68, 2]]] }],
  ['person', '16.02', 'Sleeper', 203, { 14: 24, 15: 16, 16: 40, 18: 29, 19: 32, 22: 1, 23: 40, 24: 21 }, { box: '-', off: [GREY_START] }],
  ['proj', '3', '2016_2_soft', 203, { 14: 24, 15: 16, 16: 40, 18: 29, 19: 32, 22: 1, 23: 40, 24: 21 }, { box: '+' }],
  ['person', '17.02', 'Eager', 169, { 13: 32, 14: 64, 15: 26, 16: 32, 18: 10, 19: 5 }, { box: '-', off: [[336, 60]], over: [14, 15] }],
  ['proj', '3', '2016_2_soft', 169, { 13: 32, 14: 64, 15: 26, 16: 32, 18: 10, 19: 5 }, { box: '-', over: [14, 15] }],
  ['task', '3.1.1.2', 'system test planning', 48, {}, { bar: ['blue', 16, 89, [[0, 5], [12, 5], [24, 5], [36, 5], [72, 5], [84, 5]]] }],
  ['task', '3.1.1.3', 'software installation planning', 34, {}, { bar: ['cyan', 112, 74, [[0, 5], [12, 5], [24, 5], [60, 5], [72, 2]]] }],
  ['task', '3.1.1.4', 'software transition planning', 40, {}, { bar: ['blue', 112, 77, [[0, 5], [12, 5], [24, 5], [60, 5], [72, 5]]] }],
  ['task', '3.1.2.3', 'software development library', 32, {}, { bar: ['violet', 256, 41, [[0, 5], [12, 5], [24, 5], [36, 5]]] }],
  ['task sel', '3.1.3.3', 'system requirements', 15, {}, { bar: ['green', 451, 61, [[0, 2], [21, 5], [57, 4]]], hatch: true }],
  ['person', '18.01', 'Slow', 82, { 16: 40, 18: 10, 19: 32 }, { box: '+', off: [GREY_START] }],
  ['person', '19.01', 'Fast', 156, { 14: 24, 15: 10, 16: 16, 17: 12, 18: 13, 19: 5, 22: 22, 23: 33, 24: 21 }, { box: '+' }],
  ['person', '20.02', 'Think', 236, { 13: 16, 14: 24, 15: 10, 16: 16, 17: 12, 18: 32, 19: 25, 22: 40, 23: 40, 24: 21 }, { box: '-', off: [[612, 36], [672, 36], [720, 12]] }],
  ['proj', '3', '2016_2_soft', 236, { 13: 16, 14: 24, 15: 10, 16: 16, 17: 12, 18: 32, 19: 25, 22: 40, 23: 40, 24: 21 }, { box: '+' }],
  ['person', '21.02', 'Consider', 141, { 15: 24, 16: 40, 18: 10, 19: 28, 20: 18, 23: 20 }, { box: '-', off: [GREY_START] }],
  ['proj', '3', '2016_2_soft', 141, { 15: 24, 16: 40, 18: 10, 19: 28, 20: 18, 23: 20 }, { box: '+' }],
  ['task', '', '', '', {}, {}]
];
const totals = { 13: 48, 14: 136, 15: 86, 16: 224, 17: 24, 18: 104, 19: 135, 20: 36, 22: 86, 23: 160, 24: 63 };

const tasks = [
  ['', 'software de...', '4', '18.04.16 08:00', '21.04.16 17'],
  ['', 'software de...', '4.5', '22.04.16 08:00', '28.04.16 12'],
  ['', 'non-delivera...', '1...', '28.04.16 13:00', '02.05.16 11'],
  ['sum', 'system req...', '5...', '28.03.16 11:00', '05.04.16 09'],
  ['', 'analysis of ...', '2...', '02.05.16 11:00', '04.05.16 15'],
  ['', 'operational ...', '3...', '04.05.16 15:00', '11.05.16 09'],
  ['sel', 'system req...', '1...', '04.05.16 15:00', '09.05.16 14'],
  ['', 'system des...', '5...', '04.05.16 15:00', '12.05.16 17']
];

const gantt = [
  { name: 'software test environment', bar: ['violet', 256, 17, [[0, 5], [12, 5]]], off: [[612, 36]] },
  { name: 'software development library', bar: ['violet', 256, 41, [[0, 5], [12, 5], [24, 5], [36, 5]]], off: [[336, 60]] },
  { name: 'software development files', bar: ['violet', 304, 75, [[0, 5], [36, 5], [48, 5], [60, 5], [72, 3]]] },
  { name: 'non-deliverable software', bar: ['violet', 378, 48, [[0, 5], [10, 5], [46, 2]]], off: [[612, 36]] },
  { name: 'system requirements analysis', labelAt: 109 },
  { name: 'analysis of user input', bar: ['blue', 425, 27, [[0, 4], [11, 5], [23, 4]]], off: [GREY_START, [612, 36]] },
  { name: 'operational concept', bar: ['green', 451, 82, [[0, 2], [21, 5], [57, 5], [69, 5], [81, 1]]] },
  { name: 'system requirements', bar: ['green', 451, 61, [[0, 2], [21, 5], [57, 4]]], hatch: true, off: [[336, 60]] },
  { name: 'system design', bar: ['blue', 451, 98, [[0, 2], [21, 5], [57, 5], [69, 5], [81, 5], [93, 5]]], off: [GREY_START] }
];

const span = (cls, x, w, inner = '') => `<i class="${cls}" style="left:${x}px;width:${w}px">${inner}</i>`;

function drawBar(name, o) {
  if (o.labelAt) return `<b class="label gray" style="left:${o.labelAt}px">${name}</b>`;
  if (!o.bar) return '';
  const [color, x, w, darks] = o.bar;
  return (o.hatch ? span('hatch', x - 3, w + 6) : '') +
    span('bar ' + color, x, w, darks.map(d => span('', d[0], d[1])).join('')) +
    `<b class="label" style="left:${x + w + 7}px">${name}</b>`;
}

function drawRow(kind, hours, name, o) {
  let cells = '';
  for (let w = 13; w <= 24; w++) {
    cells += `<span class="${(o.over || []).includes(w) ? 'over' : ''}">${hours[w] || ''}</span>`;
  }
  const off = (o.off || []).map(d => span('off', d[0], d[1])).join('');
  return `<div class="row ${kind}">${off}${cells}${drawBar(name, o)}</div>`;
}

const box = s => s ? `<i class="box ${s === '+' ? 'plus' : ''}"></i>` : '';

document.getElementById('weeks').innerHTML =
  Array.from({ length: 12 }, (_, i) => `<span>${13 + i}</span>`).join('');

document.getElementById('staff').innerHTML = staff.map(([kind, nr, name, effort, , o]) =>
  `<tr class="${kind}"><td><div class="nr">${box(o.box)}${nr}</div></td><td>${name}</td><td class="num">${effort}</td></tr>`).join('');

document.getElementById('usage').insertAdjacentHTML('beforeend',
  drawRow('total', totals, '', {}) + staff.map(([kind, , name, , hours, o]) => drawRow(kind, hours, name, o)).join(''));

document.getElementById('tasks').innerHTML = tasks.map(([kind, name, dur, start, finish]) =>
  `<tr class="${kind}"><td><div class="nr">${box(kind === 'sum' ? '-' : '')}</div></td><td>${name}</td><td class="num">${dur}</td><td>${start}</td><td>${finish}</td></tr>`).join('');

document.getElementById('gantt').insertAdjacentHTML('beforeend',
  gantt.map(g => drawRow('', {}, g.name, g)).join(''));
```
